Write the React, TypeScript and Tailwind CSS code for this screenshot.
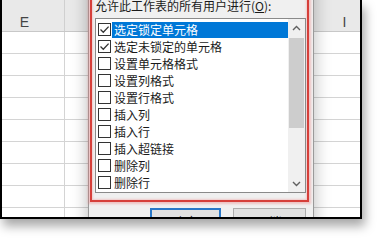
const items = [
  { label: "选定锁定单元格", checked: true, selected: true },
  { label: "选定未锁定的单元格", checked: true },
  { label: "设置单元格格式" },
  { label: "设置列格式" },
  { label: "设置行格式" },
  { label: "插入列" },
  { label: "插入行" },
  { label: "插入超链接" },
  { label: "删除列" },
  { label: "删除行" },
];

const cols = ["E", "F", "G", "H", "I"];

const cjk = "font-['Microsoft_YaHei','Noto_Sans_CJK_SC','Noto_Sans',sans-serif]";

function CheckBox({ checked }: { checked?: boolean }) {
  return (
    <div className="w-[13px] h-[13px] shrink-0 border border-[#333] bg-white flex items-center justify-center">
      {checked && (
        <svg viewBox="0 0 11 11" className="w-[11px] h-[11px]">
          <path d="M1.5 5.5 L4.3 8.3 L9.6 2.6" fill="none" stroke="#333" strokeWidth="1.3" />
        </svg>
      )}
    </div>
  );
}

function Sheet() {
  return (
    <div className="ml-[-17px] flex flex-col font-['Liberation_Sans',sans-serif]">
      <div className="flex h-[32px] bg-[#e9e9e9] border-b border-[#c8c8c8]">
        {cols.map((c) => (
          <div key={c} className="w-[80px] shrink-0 border-r border-[#d0d0d0] flex justify-center pt-[12px] text-[14px] leading-[20px] text-[#444]">
            {c}
          </div>
        ))}
      </div>
      {Array.from({ length: 9 }).map((_, r) => (
        <div key={r} className="flex h-[22px] border-b border-[#d4d4d4] bg-white">
          {cols.map((c) => (
            <div key={c} className="w-[80px] shrink-0 border-r border-[#d4d4d4]" />
          ))}
        </div>
      ))}
    </div>
  );
}

function Chevron({ up }: { up?: boolean }) {
  return (
    <svg viewBox="0 0 9 6" className="w-[9px] h-[6px]">
      <path d={up ? "M1 5 L4.5 1.5 L8 5" : "M1 1 L4.5 4.5 L8 1"} fill="none" stroke="#606060" strokeWidth="1.4" />
    </svg>
  );
}

function ListBox() {
  return (
    <div className="mt-[4px] h-[175px] border border-[#8a8a8a] bg-white flex">
      <div className="flex-1 pt-[2px] pl-[2px] flex flex-col">
        {items.map((it) => (
          <div key={it.label} className="h-[17px] flex items-center gap-[1px]">
            <CheckBox checked={it.checked} />
            <div
              className={
                "flex-1 h-[16px] pl-[2px] text-[12px] leading-[16px] whitespace-nowrap " +
                (it.selected ? "bg-[#0078d7] text-white" : "text-[#1a1a1a]")
              }
            >
              {it.label}
            </div>
          </div>
        ))}
      </div>
      <div className="w-[17px] bg-[#f0f0f0] flex flex-col items-center">
        <div className="h-[17px] flex items-center justify-center">
          <Chevron up />
        </div>
        <div className="mt-[2px] w-[15px] h-[90px] bg-[#cdcdcd]" />
        <div className="flex-1" />
        <div className="h-[17px] flex items-center justify-center">
          <Chevron />
        </div>
      </div>
    </div>
  );
}

function Dialog() {
  return (
    <div className={"absolute left-[86px] top-[-30px] w-[226px] h-[275px] bg-[#f0f0f0] border-x border-[#9a9a9a] shadow-[0_0_16px_rgba(0,0,0,0.28)] " + cjk}>
      <div className="mt-[20px] ml-[1px] mr-[4px] border-2 border-[#d63f3a] shadow-[0_0_2px_2px_rgba(235,110,110,0.35),inset_0_0_2px_1px_rgba(235,110,110,0.3)] pl-[3px] pr-[1px] pb-[7px]">
        <div className="mt-[6px] h-[16px] text-[12px] leading-[16px] text-[#1a1a1a] whitespace-nowrap">
          允许此工作表的所有用户进行(<span className="underline">O</span>):
        </div>
        <ListBox />
      </div>
      <div className="mt-[6px] mr-[7px] flex justify-end gap-[12px]">
        <div className="w-[71px] h-[27px] border-2 border-[#2a78c8] bg-[#e1e1e1] flex items-center justify-center text-[12px] text-[#1a1a1a]">
          确定
        </div>
        <div className="w-[73px] h-[27px] border border-[#adadad] bg-[#e1e1e1] flex items-center justify-center text-[12px] text-[#1a1a1a]">
          取消
        </div>
      </div>
    </div>
  );
}

export default function App() {
  return (
    <div className="w-[382px] h-[240px] bg-white">
      <div className="relative w-[362px] h-[219px] overflow-hidden border-l-2 border-r-2 border-b-2 border-black bg-white shadow-[3px_7px_10px_rgba(0,0,0,0.35)]">
        <Sheet />
        <Dialog />
      </div>
    </div>
  );
}
